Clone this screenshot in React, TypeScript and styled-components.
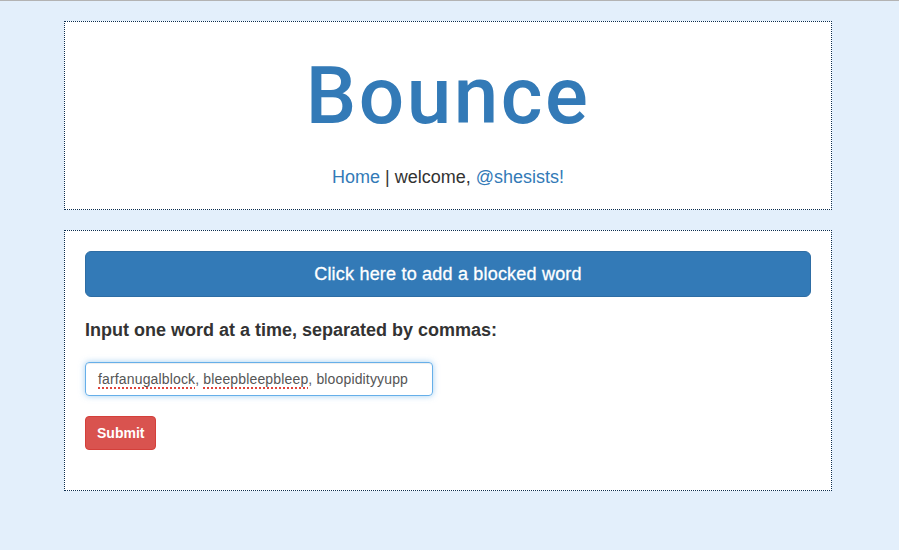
import styled, { createGlobalStyle } from "styled-components";

const GlobalStyle = createGlobalStyle`
  html, body {
    margin: 0;
    padding: 0;
    background: #e3effb;
    font-family: "Liberation Sans", Arial, sans-serif;
    color: #333;
  }
  body {
    border-top: 1px solid #b3b3b3;
  }
`;

const Page = styled.div`
  padding: 20px 0 40px 64px;
  display: flex;
  flex-direction: column;
  gap: 20px;
`;

const Panel = styled.section<{ $pad: string }>`
  box-sizing: border-box;
  width: 768px;
  background: #fff;
  border: 1px dotted #0b2d4f;
  padding: ${({ $pad }) => $pad};
  display: flex;
  flex-direction: column;
`;

const Title = styled.h1`
  margin: 0;
  text-align: center;
  font-family: "Roboto", "Lato", sans-serif;
  font-weight: 500;
  font-size: 80px;
  line-height: 1;
  letter-spacing: 2.5px;
  color: #337ab7;
`;

const Nav = styled.nav`
  margin-top: 31px;
  text-align: center;
  font-size: 18px;
  color: #333;
`;

const NavLink = styled.a`
  color: #337ab7;
  text-decoration: none;
`;

const BigButton = styled.button`
  display: block;
  width: 100%;
  height: 46px;
  background: #337ab7;
  border: 1px solid #2e6da4;
  border-radius: 6px;
  color: #fff;
  font-family: "Liberation Sans", Arial, sans-serif;
  font-size: 18px;
  letter-spacing: 0.2px;
  -webkit-text-stroke: 0.3px #fff;
  cursor: pointer;
`;

const Label = styled.label`
  margin-top: 23px;
  font-weight: 700;
  font-size: 18px;
  color: #333;
`;

const FakeInput = styled.div`
  margin-top: 21px;
  width: 348px;
  height: 34px;
  box-sizing: border-box;
  padding: 0 12px;
  display: flex;
  align-items: center;
  border: 1px solid #66afe9;
  border-radius: 4px;
  box-shadow: inset 0 1px 1px rgba(0, 0, 0, 0.075), 0 0 6px rgba(102, 175, 233, 0.6);
  font-size: 14px;
  letter-spacing: 0.15px;
  color: #555;
  white-space: pre;
`;

const Misspelled = styled.span`
  text-decoration: underline dotted #e0453c;
  text-decoration-thickness: 2px;
  text-underline-offset: 3px;
`;

const SubmitButton = styled.button`
  margin-top: 20px;
  align-self: flex-start;
  height: 34px;
  padding: 0 11px;
  background: #d9534f;
  border: 1px solid #d43f3a;
  border-radius: 4px;
  color: #fff;
  font-family: "Liberation Sans", Arial, sans-serif;
  font-size: 14px;
  font-weight: 700;
  cursor: pointer;
`;

export default function App() {
  return (
    <>
      <GlobalStyle />
      <Page>
        <Panel $pad="34px 20px 21px">
          <Title>Bounce</Title>
          <Nav>
            <NavLink href="#">Home</NavLink> | welcome,{" "}
            <NavLink href="#">@shesists!</NavLink>
          </Nav>
        </Panel>
        <Panel $pad="20px 20px 40px">
          <BigButton>Click here to add a blocked word</BigButton>
          <Label>Input one word at a time, separated by commas:</Label>
          <FakeInput role="textbox">
            <Misspelled>farfanugalblock</Misspelled>, <Misspelled>bleepbleepbleep</Misspelled>, bloopidityyupp
          </FakeInput>
          <SubmitButton>Submit</SubmitButton>
        </Panel>
      </Page>
    </>
  );
}
